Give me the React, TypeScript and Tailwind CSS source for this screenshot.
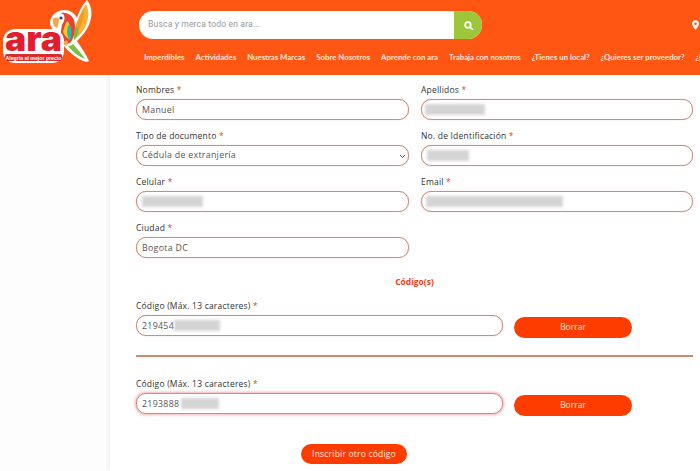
const navLinks = [
  "Imperdibles",
  "Actividades",
  "Nuestras Marcas",
  "Sobre Nosotros",
  "Aprende con ara",
  "Trabaja con nosotros",
  "¿Tienes un local?",
  "¿Quieres ser proveedor?",
  "¿Eres",
];

function Logo() {
  return (
    <svg width="92" height="70" viewBox="0 0 92 70" className="shrink-0">
      {/* parrot outline */}
      <path
        d="M49 22 C50 15 56 10 63 10 C69 10 74 13 76 18 C78 11 82 4 86 0 C90 5 92 13 89 22 C87 29 82 35 76 41 C80 47 85 54 88 61 C87 62 84 62 82 61 C75 58 68 52 63 46 C59 42 57 36 57 32 C52 31 49 27 49 22 Z"
        fill="#fff"
      />
      {/* tail */}
      <path d="M77 20 C79 14 82 8 85 4 C88 10 88 18 85 25 C83 31 78 36 73 40 C73 33 74 26 77 20 Z" fill="#f9b233" />
      <path d="M77 20 C79 15 81 12 83 9 C84 15 82 23 78 29 C77 32 75 36 73 40 C73 33 74 26 77 20 Z" fill="#f59a23" />
      <path d="M73 40 C73 34 74 30 75 26 C77 28 78 31 77 34 C76 36 75 38 73 40 Z" fill="#6cc04a" />
      <path d="M72 44 C76 49 81 54 84 59 C78 57 71 51 67 46 C69 46 71 45 72 44 Z" fill="#7ac143" />
      {/* head and body */}
      <path d="M60 13 C66 12 71 15 73 20 C75 26 74 36 70 42 C67 45 63 43 61 40 C59 34 60 26 62 21 C63 18 62 15 60 13 Z" fill="#e8432e" />
      <path d="M66 21 C70 24 71 32 69 40 C66 38 63 35 62 32 C63 28 64 24 66 21 Z" fill="#f9c62e" />
      <path d="M68 24 C71 28 71 35 69 41 C67 38 66 35 66 32 C66 29 67 26 68 24 Z" fill="#2fb5a5" />
      <path d="M52 21 C53 16 58 13 62 14 C64 16 64 20 62 23 C60 26 60 29 60 33 C57 32 56 30 56 28 C53 27 52 24 52 21 Z" fill="#fff" />
      <path d="M52 19 C54 17 57 17 58 19 C58 22 57 26 56 28 C53 27 51 23 52 19 Z" fill="#f4a64a" />
      <circle cx="60" cy="18" r="1.6" fill="#27408b" />
      <circle cx="65" cy="43" r="2.4" fill="#f4a64a" />
      {/* wordmark plate */}
      <rect x="2" y="29" width="61" height="34" rx="12" fill="#fff" />
      <text
        x="4"
        y="51"
        fontFamily="Inter, sans-serif"
        fontWeight="900"
        fontSize="34"
        fill="#e11d2e"
        textLength="57"
        lengthAdjust="spacingAndGlyphs"
      >
        ara
      </text>
      <rect x="4" y="54" width="57" height="7" rx="2" fill="#d92a2e" />
      <text
        x="32.5"
        y="59.6"
        textAnchor="middle"
        fontFamily="'Liberation Sans', sans-serif"
        fontWeight="700"
        fontSize="5.2"
        fill="#fff"
      >
        Alegría al mejor precio
      </text>
    </svg>
  );
}

function Header() {
  return (
    <header className="h-[75px] bg-[#ff5614] overflow-hidden relative">
      <div className="flex h-[46px] items-start">
        <div className="w-[139px] shrink-0 pl-px">
          <Logo />
        </div>
        <div className="mt-[11px] flex h-[28px] w-[343px] overflow-hidden rounded-full bg-white">
          <div className="flex-1 pl-[9px] font-['Roboto',sans-serif] text-[8.7px] leading-[27px] tracking-[0.1px] text-[#999]">
            Busca y merca todo en ara...
          </div>
          <div className="flex w-[28px] items-center justify-center bg-[#9dc63b]">
            <svg width="9" height="9" viewBox="0 0 24 24" fill="none" stroke="#fff" strokeWidth="4.5" strokeLinecap="round">
              <circle cx="10.5" cy="10.5" r="7.5" />
              <path d="M16.5 16.5 L22 22" />
            </svg>
          </div>
        </div>
        <svg width="7" height="10" viewBox="0 0 8 11" className="ml-[210px] mt-[20px] shrink-0">
          <path
            fillRule="evenodd"
            d="M4 0 C6.2 0 8 1.7 8 3.9 C8 6.5 5.4 9.3 4 11 C2.6 9.3 0 6.5 0 3.9 C0 1.7 1.8 0 4 0 Z M4 2.5 A1.5 1.5 0 1 0 4 5.5 A1.5 1.5 0 1 0 4 2.5 Z"
            fill="#fff"
          />
        </svg>
      </div>
      <nav className="ml-[144px] flex gap-[11px] whitespace-nowrap pt-[4px] font-['Lato',sans-serif] text-[7.8px] font-bold leading-[14px] text-[#ffe6d6]">
        {navLinks.map((l) => (
          <a key={l}>{l}</a>
        ))}
      </nav>
    </header>
  );
}

function Label({ text }: { text: string }) {
  return (
    <label className="block h-[15px] font-['Open_Sans',sans-serif] text-[8.5px] leading-[12px] tracking-[0.2px] text-[#333]">
      {text} <span className="text-[#e8401a]">*</span>
    </label>
  );
}

const inputCls =
  "block w-full h-[21px] rounded-[10px] border border-[#cf8d7a] bg-white px-[5px] font-['Open_Sans',sans-serif] text-[8.8px] tracking-[0.3px] text-[#555] outline-none shadow-[0_0_1px_#e0b0a0]";

function Field({
  label,
  value,
  blurLeft,
  blurWidth,
  focused,
}: {
  label: string;
  value?: string;
  blurLeft?: number;
  blurWidth?: number;
  focused?: boolean;
}) {
  return (
    <div>
      <Label text={label} />
      <div className="relative">
        <input
          readOnly
          value={value ?? ""}
          className={focused ? inputCls + " shadow-[0_0_3px_1px_#efb0b0]" : inputCls}
        />
        {blurWidth ? (
          <div
            className="absolute top-[5px] h-[11px] bg-[#d4d4d4] blur-[1.5px]"
            style={{ left: blurLeft, width: blurWidth }}
          />
        ) : null}
      </div>
    </div>
  );
}

function BorrarButton() {
  return (
    <button className="ml-[11px] mt-[17px] h-[21px] w-[118px] shrink-0 rounded-full bg-[#ff3c00] font-['Open_Sans',sans-serif] text-[8.5px] text-[#ffe9df]">
      Borrar
    </button>
  );
}

export default function App() {
  return (
    <div className="h-[471px] w-[700px] overflow-hidden bg-[#fdfdfd]">
      <Header />
      <main className="ml-[110px] h-[396px] bg-white pl-[26px] pr-[7px] pt-[9px] shadow-[-2px_0_4px_rgba(0,0,0,0.06)]">
        <div className="grid grid-cols-[273px_272px] gap-x-[12px] gap-y-[10px]">
          <Field label="Nombres" value="Manuel" />
          <Field label="Apellidos" blurLeft={4} blurWidth={60} />
          <div>
            <Label text="Tipo de documento" />
            <div className="relative">
              <select className={inputCls + " appearance-none"} defaultValue="ce">
                <option value="ce">Cédula de extranjería</option>
              </select>
              <svg width="7" height="5" viewBox="0 0 7 5" className="absolute right-[3px] top-[9px]">
                <path d="M1 1 L3.5 3.5 L6 1" fill="none" stroke="#555" strokeWidth="1" />
              </svg>
            </div>
          </div>
          <Field label="No. de Identificación" blurLeft={6} blurWidth={42} />
          <Field label="Celular" blurLeft={6} blurWidth={61} />
          <Field label="Email" blurLeft={5} blurWidth={137} />
          <Field label="Ciudad" value="Bogota DC" />
        </div>

        <p className="mt-[17px] text-center font-['Open_Sans',sans-serif] text-[8.5px] font-bold leading-[14px] text-[#e8401a]">
          Código(s)
        </p>

        <div className="mt-[11px] flex items-start">
          <div className="w-[367px] shrink-0">
            <Field label="Código (Máx. 13 caracteres)" value="219454" blurLeft={38} blurWidth={46} />
          </div>
          <BorrarButton />
        </div>

        <hr className="mt-[17px] border-0 border-t-2 border-[#cf8a73]" />

        <div className="mt-[21px] flex items-start">
          <div className="w-[367px] shrink-0">
            <Field label="Código (Máx. 13 caracteres)" value="2193888" blurLeft={45} blurWidth={38} focused />
          </div>
          <BorrarButton />
        </div>

        <div className="mt-[28px] flex pl-[165px]">
          <button className="h-[20px] w-[106px] rounded-full bg-[#ff3c00] font-['Open_Sans',sans-serif] text-[8.5px] tracking-[0.2px] text-[#ffe9df]">
            Inscribir otro código
          </button>
        </div>
      </main>
    </div>
  );
}
